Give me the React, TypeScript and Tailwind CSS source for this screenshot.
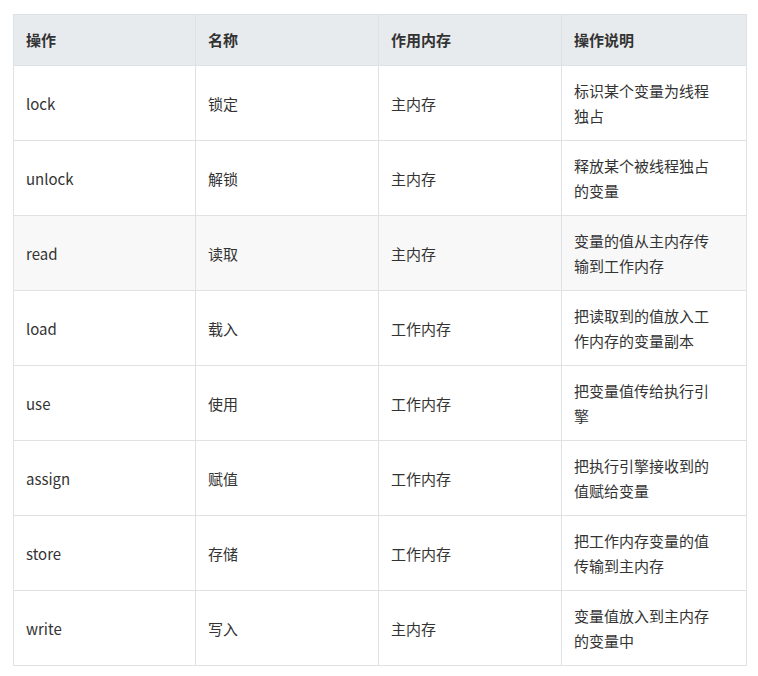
const rows = [
  ["lock", "锁定", "主内存", "标识某个变量为线程独占"],
  ["unlock", "解锁", "主内存", "释放某个被线程独占的变量"],
  ["read", "读取", "主内存", "变量的值从主内存传输到工作内存"],
  ["load", "载入", "工作内存", "把读取到的值放入工作内存的变量副本"],
  ["use", "使用", "工作内存", "把变量值传给执行引擎"],
  ["assign", "赋值", "工作内存", "把执行引擎接收到的值赋给变量"],
  ["store", "存储", "工作内存", "把工作内存变量的值传输到主内存"],
  ["write", "写入", "主内存", "变量值放入到主内存的变量中"],
];

export default function App() {
  return (
    <div className="bg-white w-[758px] h-[676px] pt-[14px] pl-[13px] text-[#333] text-[15px]" style={{ fontFamily: '"Noto Sans CJK SC", "Open Sans", sans-serif' }}>
      <table className="border-collapse table-fixed w-[733px]">
        <colgroup>
          <col className="w-[182px]" />
          <col className="w-[183px]" />
          <col className="w-[183px]" />
          <col className="w-[185px]" />
        </colgroup>
        <thead>
          <tr className="bg-[#e8ebee] h-[51px]">
            {["操作", "名称", "作用内存", "操作说明"].map((h) => (
              <th key={h} className="border border-[#dfe2e5] px-3 text-left font-bold">{h}</th>
            ))}
          </tr>
        </thead>
        <tbody>
          {rows.map((r, i) => (
            <tr key={i} className={`h-[75px] ${i === 2 ? "bg-[#f8f8f8]" : "bg-white"}`}>
              {r.map((c, j) => (
                <td key={j} className="border border-[#dfe2e5] px-3 align-middle leading-[25px]">
                  {j === 3 ? <div className="w-[140px]">{c}</div> : c}
                </td>
              ))}
            </tr>
          ))}
        </tbody>
      </table>
    </div>
  );
}
